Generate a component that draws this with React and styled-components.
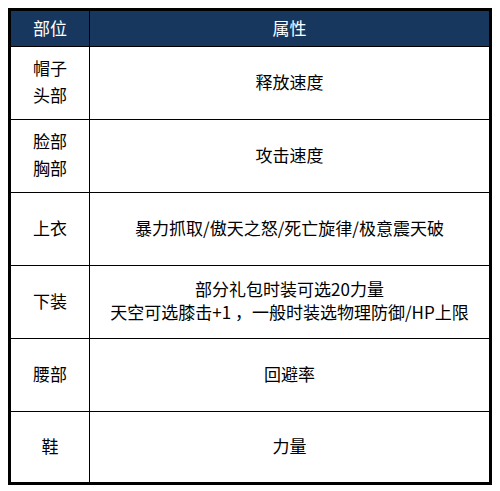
import React from "react";
import styled, { createGlobalStyle } from "styled-components";

const rows = [
  { part: ["帽子", "头部"], attr: ["释放速度"] },
  { part: ["脸部", "胸部"], attr: ["攻击速度"] },
  { part: ["上衣"], attr: ["暴力抓取/傲天之怒/死亡旋律/极意震天破"] },
  {
    part: ["下装"],
    attr: ["部分礼包时装可选20力量", "天空可选膝击+1 ，一般时装选物理防御/HP上限"],
  },
  { part: ["腰部"], attr: ["回避率"] },
  { part: ["鞋"], attr: ["力量"] },
];

function App() {
  return (
    <>
      <GlobalStyle />
      <Table>
        <HeadCell>部位</HeadCell>
        <HeadCell $last>属性</HeadCell>
        {rows.map((row, i) => {
          const end = i === rows.length - 1;
          return (
            <React.Fragment key={i}>
              <PartCell $end={end}>
                {row.part.map((t) => (
                  <PartLine key={t}>{t}</PartLine>
                ))}
              </PartCell>
              <AttrCell $end={end}>
                {row.attr.map((t) => (
                  <AttrLine key={t}>{t}</AttrLine>
                ))}
              </AttrCell>
            </React.Fragment>
          );
        })}
      </Table>
    </>
  );
}

const GlobalStyle = createGlobalStyle`
  body {
    margin: 8px;
    background: #fff;
    font-family: "Noto Sans CJK SC", "Noto Sans", sans-serif;
  }
`;

const Table = styled.div`
  display: grid;
  grid-template-columns: 79px 1fr;
  grid-template-rows: 36px repeat(5, 73px) 70px;
  width: 484px;
  box-sizing: border-box;
  border: 3px solid #000;
  font-size: 17px;
  color: #000;
`;

const Cell = styled.div`
  display: flex;
  flex-direction: column;
  align-items: center;
  justify-content: center;
  text-align: center;
  white-space: nowrap;
  border-bottom: ${(p) => (p.$end ? "none" : "1px solid #000")};
`;

const HeadCell = styled(Cell)`
  background: #17375e;
  color: #fff;
  border-right: ${(p) => (p.$last ? "none" : "1px solid #000")};
  padding-bottom: 3px;
`;

const PartCell = styled(Cell)`
  border-right: 1px solid #000;
  padding-bottom: 4px;
`;

const AttrCell = styled(Cell)`
  padding-bottom: 4px;
`;

const PartLine = styled.div`
  line-height: 27px;
`;

const AttrLine = styled.div`
  line-height: 23px;
`;

export default App;
